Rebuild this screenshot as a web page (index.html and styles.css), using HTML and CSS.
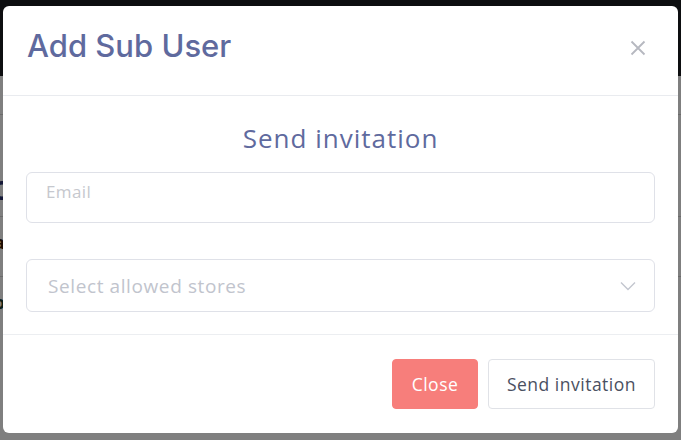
FILE: index.html
```html
<!DOCTYPE html>
<html lang="en">
<head>
    <meta charset="UTF-8">
    <meta name="viewport" content="width=device-width, initial-scale=1.0">
    <title>Add Sub User</title>
    <link rel="stylesheet" href="styles.css">
</head>
<body>

    <!-- Page behind the modal -->
    <div class="page">
        <div class="topbar"></div>
        <div class="page-body">
            <div class="page-line line-a"></div>
            <span class="page-letter letter-c">C</span>
            <div class="page-line line-b"></div>
            <span class="page-letter letter-a">a</span>
            <div class="page-line line-c"></div>
            <span class="page-letter letter-o">o</span>
        </div>
    </div>

    <div class="backdrop"></div>

    <div class="modal">
        <div class="modal-header">
            <h2 class="modal-title">Add Sub User</h2>
            <button class="modal-close" aria-label="Close">
                <svg width="16" height="16" viewBox="0 0 16 16">
                    <path d="M1.5 1.5 L14.5 14.5 M14.5 1.5 L1.5 14.5" stroke="#b6b8c0" stroke-width="1.8" fill="none"/>
                </svg>
            </button>
        </div>

        <div class="modal-body">
            <h3 class="form-title">Send invitation</h3>
            <div class="field">
                <input type="email" class="field-input" placeholder="Email">
            </div>
            <div class="field select-field">
                <span class="select-placeholder">Select allowed stores</span>
                <svg class="chevron" width="16" height="10" viewBox="0 0 16 10">
                    <path d="M1 1.5 L8 8.5 L15 1.5" stroke="#c3c6cf" stroke-width="1.4" fill="none"/>
                </svg>
            </div>
        </div>

        <div class="modal-footer">
            <button class="btn btn-close">Close</button>
            <button class="btn btn-send">Send invitation</button>
        </div>
    </div>

</body>
</html>
```

FILE: styles.css
```css
body {
    margin: 0;
    width: 681px;
    height: 440px;
    overflow: hidden;
    position: relative;
    background-color: #ffffff;
    font-family: 'Open Sans', sans-serif;
}

.page {
    display: flex;
    flex-direction: column;
    height: 100%;
}

.topbar {
    height: 76px;
    background-color: #1b1d21;
}

.page-body {
    flex: 1;
    position: relative;
    background-color: #ffffff;
}

.page-line {
    position: absolute;
    left: 0;
    width: 100%;
    height: 1px;
    background-color: #d6d6d6;
}

.line-a { top: 38px; }
.line-b { top: 140px; }
.line-c { top: 200px; }

.page-letter {
    position: absolute;
    left: -8px;
    font-size: 26px;
    font-weight: 700;
    color: #2b3270;
}

.letter-c { top: 96px; }
.letter-a { top: 154px; font-size: 18px; color: #3a1a08; left: -6px; }
.letter-o { top: 214px; font-size: 18px; color: #1a4030; left: -6px; }

.backdrop {
    position: absolute;
    inset: 0;
    background-color: rgba(0, 0, 0, 0.5);
}

.modal {
    position: absolute;
    top: 6px;
    left: 3px;
    width: 675px;
    height: 427px;
    background-color: #ffffff;
    border-radius: 6px;
    display: flex;
    flex-direction: column;
    box-sizing: border-box;
}

.modal-header {
    height: 90px;
    box-sizing: border-box;
    padding: 0 32px 0 24px;
    display: flex;
    align-items: center;
    justify-content: space-between;
    border-bottom: 1px solid #e9ebef;
}

.modal-title {
    margin: 0 0 10px 0;
    font-family: 'Inter', sans-serif;
    font-size: 31px;
    font-weight: 500;
    color: #5f6a9e;
    letter-spacing: 0;
}

.modal-close {
    background: none;
    border: none;
    padding: 0;
    margin-bottom: 6px;
    cursor: pointer;
    display: flex;
}

.modal-body {
    padding: 0 23px;
    display: flex;
    flex-direction: column;
    height: 239px;
    box-sizing: border-box;
    border-bottom: 1px solid #eceef1;
}

.form-title {
    margin: 25px 0 17px 0;
    text-align: center;
    font-size: 26px;
    font-weight: 400;
    line-height: 34px;
    letter-spacing: 1px;
    color: #5f6a9e;
}

.field {
    height: 51px;
    border: 1px solid #dfe1e8;
    border-radius: 6px;
    box-sizing: border-box;
}

.field-input {
    width: 100%;
    border: none;
    outline: none;
    background: transparent;
    padding: 7px 19px 6px;
    box-sizing: border-box;
    font-family: 'Open Sans', sans-serif;
    font-size: 17px;
    letter-spacing: 0.4px;
}

.field-input::placeholder {
    color: #c6c8ce;
}

.select-field {
    margin-top: 36px;
    height: 53px;
    display: flex;
    align-items: center;
    justify-content: space-between;
    padding: 0 18px 0 21px;
}

.select-placeholder {
    font-size: 19px;
    letter-spacing: 0.6px;
    color: #c1c4cd;
}

.modal-footer {
    flex: 1;
    display: flex;
    align-items: center;
    justify-content: flex-end;
    gap: 10px;
    padding: 0 23px 0 0;
}

.btn {
    height: 50px;
    border-radius: 4px;
    font-family: 'Open Sans', sans-serif;
    font-size: 17.5px;
    letter-spacing: 0.5px;
    cursor: pointer;
    padding: 0;
}

.btn-close {
    width: 86px;
    background-color: #f77e7b;
    border: 1px solid #f77e7b;
    color: #ffffff;
}

.btn-send {
    width: 167px;
    background-color: #ffffff;
    border: 1px solid #e0e2e7;
    color: #4a5061;
}
```
